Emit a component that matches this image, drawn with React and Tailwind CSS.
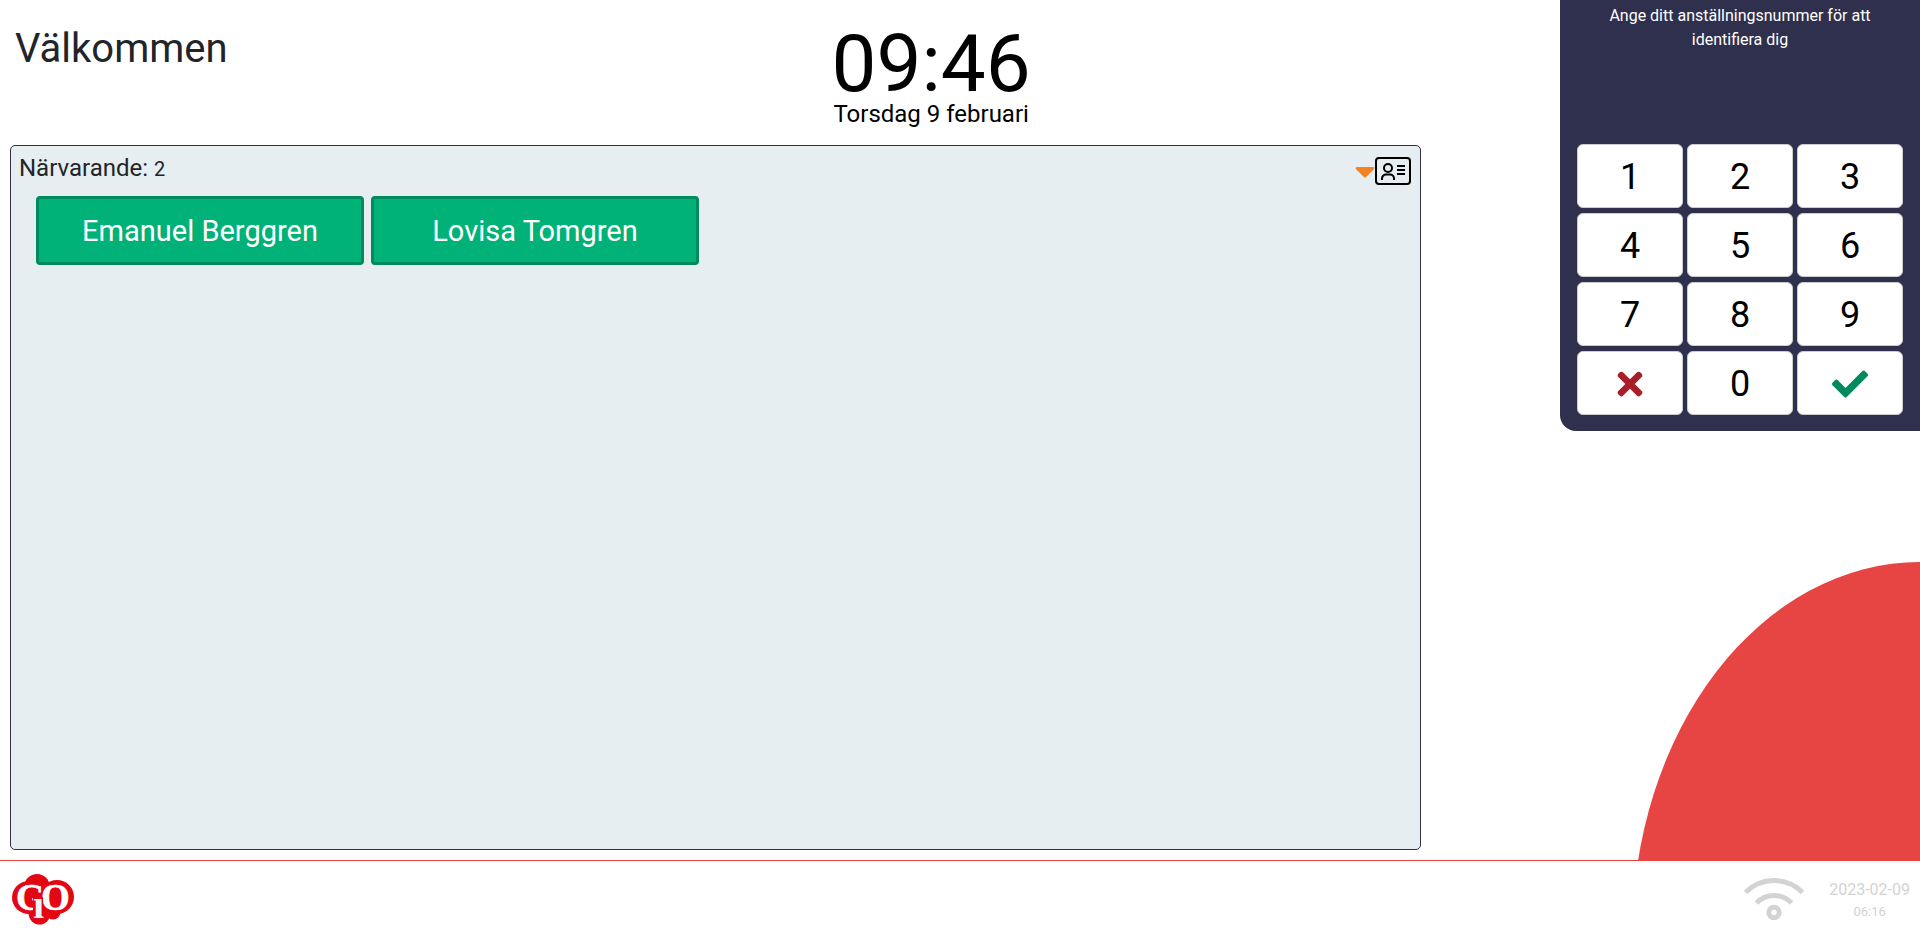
import { FaCaretDown, FaCheck, FaTimes } from "react-icons/fa";

const present = ["Emanuel Berggren", "Lovisa Tomgren"];
const digits = ["1", "2", "3", "4", "5", "6", "7", "8", "9"];

function IdCardIcon() {
  return (
    <svg viewBox="0 0 36 28" className="h-7 w-9" fill="none" stroke="#000" aria-hidden="true">
      <rect x="1" y="1" width="34" height="26" rx="3" strokeWidth="2" />
      <circle cx="13" cy="11" r="4" strokeWidth="2" />
      <path d="M7 23v-1.5a4 4 0 0 1 4-4h4a4 4 0 0 1 4 4V23" strokeWidth="2" />
      <path d="M22 9h8M22 13h8M22 17h8" strokeWidth="2" />
    </svg>
  );
}

function WifiIcon() {
  return (
    <svg viewBox="0 0 60 43" className="h-[43px] w-[60px]" fill="none" stroke="#d3d3d3" strokeWidth="5" aria-hidden="true">
      <path d="M1.500 14.500A40 40 0 0 1 58.500 14.500" />
      <path d="M12.500 25A24 24 0 0 1 47.500 25" />
      <circle cx="30" cy="34.500" r="5.200" />
    </svg>
  );
}

function Logo() {
  return (
    <svg viewBox="0 0 62 51" className="h-[51px] w-[62px]" role="img" aria-label="GiO">
      <g fill="#e30613">
        <ellipse cx="17" cy="23.500" rx="17" ry="16.500" />
        <ellipse cx="25" cy="12" rx="12.500" ry="12" />
        <ellipse cx="45" cy="23" rx="17" ry="17" />
        <ellipse cx="27.500" cy="39" rx="11" ry="11.500" />
        <ellipse cx="41" cy="38" rx="7.500" ry="7.500" />
        <rect x="16" y="18" width="30" height="22" />
      </g>
      <g fill="#fff" stroke="#fff" strokeWidth="0.600" fontFamily="'Liberation Serif', serif" fontWeight="bold">
        <text x="4" y="36" fontSize="37">G</text>
        <text x="29" y="36" fontSize="37">O</text>
        <rect x="21" y="23" width="10" height="14" fill="#e30613" stroke="none" />
        <text x="21" y="44" fontSize="40" fill="#f0f4f7" stroke="none">ı</text>
      </g>
    </svg>
  );
}

function Key({ label, children }) {
  return (
    <button
      type="button"
      aria-label={label}
      className="flex h-16 items-center justify-center rounded-md border border-[#ccc] bg-white pt-[2px] text-4xl text-black"
    >
      {children}
    </button>
  );
}

export default function App() {
  return (
    <div className="relative flex min-h-screen flex-col overflow-hidden bg-white font-['Roboto',sans-serif] text-[#212529]">
      <div className="absolute right-0 bottom-0 h-[40vh] w-[15vw] rounded-tl-[100%] bg-[#e74444]" />

      <main className="relative flex flex-1">
        <section className="flex w-3/4 flex-col pr-[19px] pb-[10px] pl-[10px]">
          <header className="grid h-[145px] grid-cols-[30%_1fr]">
            <h1 className="pt-[25px] pl-[5px] text-[40px] leading-12">Välkommen</h1>
            <div className="pt-6 pl-2 text-center text-black">
              <div className="text-[80px] leading-20">09:46</div>
              <div className="text-2xl leading-5">Torsdag 9 februari</div>
            </div>
          </header>

          <div className="flex-1 rounded-[5px] border border-[#2f2f4e] bg-[#e6eef1]">
            <div className="flex items-start justify-between pt-[3px] pr-[9px] pl-2">
              <h2 className="pt-[1px] text-2xl leading-9">
                Närvarande: <span className="text-xl">2</span>
              </h2>
              <button type="button" aria-label="Visa som kort" className="flex h-10 items-center pt-[3px]">
                <FaCaretDown className="-mr-[6px] size-8 text-[#f58220]" />
                <IdCardIcon />
              </button>
            </div>
            <div className="flex flex-wrap gap-[7px] px-[25px] pt-[7px]">
              {present.map((name) => (
                <button
                  key={name}
                  type="button"
                  className="h-[69px] w-[328px] rounded-[4px] border-3 border-[#008a5e] bg-[#00b277] text-[29px] leading-10 text-white"
                >
                  {name}
                </button>
              ))}
            </div>
          </div>
        </section>

        <div className="flex w-1/4 items-start justify-end">
          <aside className="w-3/4 rounded-bl-2xl bg-[#2f2f4e] px-[17px] pt-1 pb-4">
            <p className="h-[140px] px-6 text-center text-base text-white">
              Ange ditt anställningsnummer för att identifiera dig
            </p>
            <div className="grid grid-cols-3 gap-x-1 gap-y-[5px]">
              {digits.map((d) => (
                <Key key={d}>{d}</Key>
              ))}
              <Key label="Rensa">
                <FaTimes className="text-[#a81f2a]" />
              </Key>
              <Key>0</Key>
              <Key label="Bekräfta">
                <FaCheck className="text-[#008a5e]" />
              </Key>
            </div>
          </aside>
        </div>
      </main>

      <footer className="relative flex h-[77px] items-center justify-between border-t border-[#e74444] bg-white pr-[10px] pl-3">
        <Logo />
        <div className="flex items-center gap-[25px] text-[#d3d3d3]">
          <WifiIcon />
          <div className="pt-[2px] text-center">
            <div className="text-base leading-6">2023-02-09</div>
            <div className="text-[13px] leading-5">06:16</div>
          </div>
        </div>
      </footer>
    </div>
  );
}
